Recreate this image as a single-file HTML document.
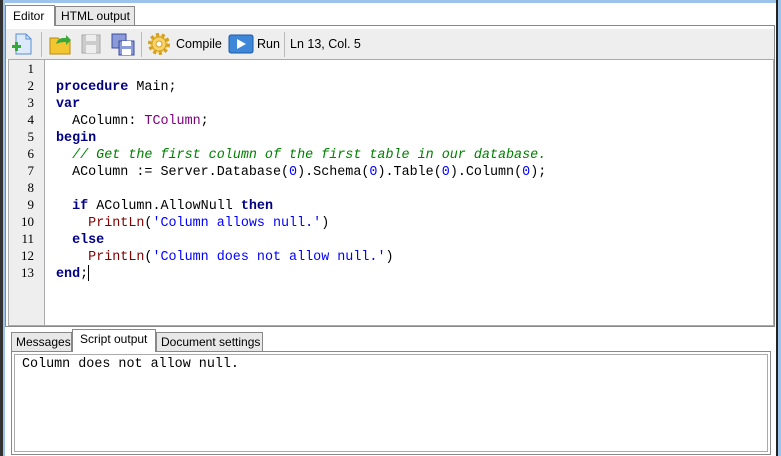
<!DOCTYPE html>
<html><head><style>
*{margin:0;padding:0;box-sizing:border-box}
body{width:781px;height:456px;background:#fff;position:relative;overflow:hidden;font-family:"Liberation Sans","DejaVu Sans",sans-serif;font-size:12px;color:#000}
.abs{position:absolute}
.code{font-family:"Liberation Mono","Courier New",monospace;font-size:13.4px;white-space:pre}
.k{color:#000080;font-weight:bold}
.t{color:#800080}
.c{color:#008000;font-style:italic}
.n{color:#0000ff}
.s{color:#0000ff}
.f{color:#800000}
.ln{position:absolute;left:8px;width:26px;text-align:right;font-family:"Liberation Serif",serif;font-size:13px}
.tab{position:absolute;border:1px solid #888;border-bottom:none;font-size:12px;padding-left:5px;line-height:18px;white-space:nowrap}
</style></head><body>
<div class="abs" style="left:0;top:0;width:781px;height:3px;background:#9cc3ea"></div>
<div class="abs" style="left:0;top:0;width:3px;height:456px;background:#333"></div>
<div class="abs" style="left:3px;top:0;width:2px;height:456px;background:#9cc3ea"></div>
<div class="abs" style="left:776px;top:0;width:2px;height:456px;background:#222"></div>
<div class="abs" style="left:778px;top:0;width:3px;height:456px;background:#9cc3ea"></div>

<div class="tab" style="left:5px;top:5px;width:50px;height:21px;background:#fff;z-index:2;padding-left:7px;line-height:20px">Editor</div>
<div class="tab" style="left:55px;top:6px;width:80px;height:19px;background:#e8e8e8">HTML output</div>
<div class="abs" style="left:5px;top:25px;width:770px;height:302px;border:1px solid #888"></div>
<div class="abs" style="left:6px;top:29px;width:768px;height:30px;background:#eee"></div>
<svg class="abs" style="left:10px;top:32px" width="25" height="24"><path d="M6 2h10l5 5v15H6z" fill="#dbe9fb" stroke="#5b8fd0"/><path d="M16 2v5h5" fill="none" stroke="#5b8fd0"/><rect x="2" y="13" width="9" height="3" fill="#3a3"/><rect x="5" y="10" width="3" height="9" fill="#3a3"/></svg>
<div class="abs" style="left:41px;top:32px;width:1px;height:25px;background:#bbb"></div>
<svg class="abs" style="left:48px;top:32px" width="26" height="24"><path d="M2 6h8l2 2h10v14H2z" fill="#f3c530" stroke="#b58a10"/><path d="M8 12q2-7 10-6v-3l5 5-5 5v-3q-6 0-10 2z" fill="#3aa83a"/></svg>
<svg class="abs" style="left:80px;top:33px" width="22" height="22"><rect x="2" y="2" width="18" height="18" fill="#ccc" stroke="#aaa"/><rect x="6" y="2" width="10" height="6" fill="#eee"/><rect x="6" y="12" width="10" height="8" fill="#eee"/></svg>
<svg class="abs" style="left:110px;top:32px" width="26" height="24"><rect x="2" y="2" width="14" height="14" fill="#8a9bd8" stroke="#3a4aa0"/><rect x="9" y="9" width="15" height="14" fill="#8a9bd8" stroke="#3a4aa0"/><rect x="12" y="9" width="9" height="5" fill="#fff"/><rect x="12" y="17" width="9" height="6" fill="#fff"/></svg>
<div class="abs" style="left:141px;top:32px;width:1px;height:25px;background:#bbb"></div>
<svg class="abs" style="left:147px;top:32px" width="24" height="24"><circle cx="12" cy="12" r="9" fill="#f7d36a" stroke="#d4a020" stroke-width="4" stroke-dasharray="3 2.6"/><circle cx="12" cy="12" r="7" fill="#f7d36a" stroke="#d4a020"/><circle cx="12" cy="12" r="3" fill="#fff" stroke="#d4a020"/></svg>
<div class="abs" style="left:176px;top:37px;font-size:12.5px">Compile</div>
<svg class="abs" style="left:228px;top:34px" width="26" height="20"><rect x="1" y="1" width="24" height="18" rx="2" fill="#3d86d8" stroke="#1c5aa8"/><path d="M9 5l9 5-9 5z" fill="#fff"/></svg>
<div class="abs" style="left:257px;top:37px;font-size:12.5px">Run</div>
<div class="abs" style="left:284px;top:32px;width:1px;height:25px;background:#bbb"></div>
<div class="abs" style="left:290px;top:37px;font-size:12.5px">Ln 13, Col. 5</div>

<div class="abs" style="left:8px;top:59px;width:766px;height:267px;border:1px solid #aaa;background:#fff"></div>
<div class="abs" style="left:9px;top:60px;width:36px;height:265px;background:#eee;border-right:1px solid #aaa"></div>
<div class="ln" style="top:61px">1</div><div class="ln" style="top:78px">2</div><div class="ln" style="top:95px">3</div><div class="ln" style="top:112px">4</div><div class="ln" style="top:129px">5</div><div class="ln" style="top:146px">6</div><div class="ln" style="top:163px">7</div><div class="ln" style="top:180px">8</div><div class="ln" style="top:197px">9</div><div class="ln" style="top:214px">10</div><div class="ln" style="top:231px">11</div><div class="ln" style="top:248px">12</div><div class="ln" style="top:265px">13</div>
<div class="abs code" style="left:56px;top:62px;line-height:17px">
<span class="k">procedure</span> Main;
<span class="k">var</span>
  AColumn: <span class="t">TColumn</span>;
<span class="k">begin</span>
  <span class="c">// Get the first column of the first table in our database.</span>
  AColumn := Server.Database(<span class="n">0</span>).Schema(<span class="n">0</span>).Table(<span class="n">0</span>).Column(<span class="n">0</span>);

  <span class="k">if</span> AColumn.AllowNull <span class="k">then</span>
    <span class="f">PrintLn</span>(<span class="s">'Column allows null.'</span>)
  <span class="k">else</span>
    <span class="f">PrintLn</span>(<span class="s">'Column does not allow null.'</span>)
<span class="k">end</span>;</div>
<div class="abs" style="left:88px;top:265px;width:1px;height:16px;background:#000"></div>

<div class="tab" style="left:11px;top:332px;width:61px;height:19px;background:#e8e8e8;padding-left:4px">Messages</div>
<div class="tab" style="left:72px;top:329px;width:84px;height:23px;background:#fff;z-index:2;padding-left:7px">Script output</div>
<div class="tab" style="left:156px;top:332px;width:107px;height:19px;background:#e8e8e8;padding-left:4px">Document settings</div>
<div class="abs" style="left:11px;top:351px;width:760px;height:104px;border:1px solid #888"></div>
<div class="abs" style="left:14px;top:354px;width:754px;height:98px;border:1px solid #aaa"></div>
<div class="abs code" style="left:22px;top:357px;font-size:13.4px">Column does not allow null.</div>
</body></html>
